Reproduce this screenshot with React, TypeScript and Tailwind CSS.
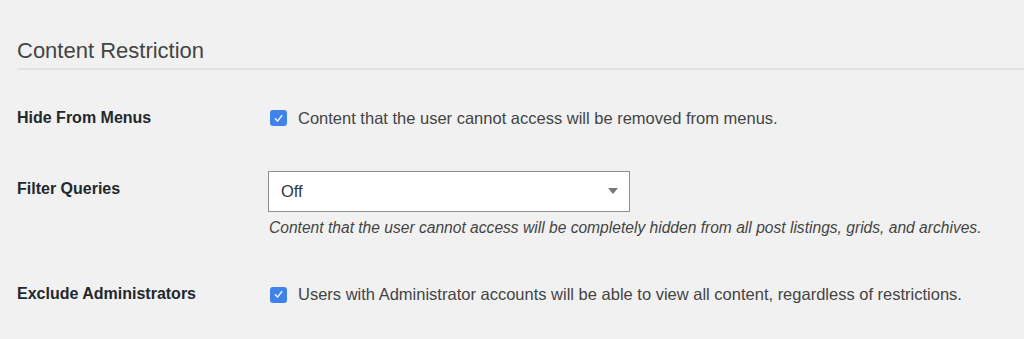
import React from "react";

const Checkbox = () => (
  <span className="flex h-[16px] w-[17px] shrink-0 items-center justify-center rounded-[3px] bg-[#3f83ea]">
    <svg viewBox="0 0 12 12" className="h-[11px] w-[11px]" fill="none">
      <path d="M2.5 6.3 L5 8.8 L9.6 2.8" stroke="#fff" strokeWidth="1.5" strokeLinecap="round" strokeLinejoin="round" />
    </svg>
  </span>
);

const Row = ({ label, children }: { label: string; children: React.ReactNode }) => (
  <div className="flex">
    <div className="w-[252px] shrink-0 text-[16px] font-bold text-[#23282d]">{label}</div>
    <div className="flex-1">{children}</div>
  </div>
);

export default function App() {
  return (
    <div
      className="h-[339px] w-[1024px] overflow-hidden bg-[#f1f1f1] pl-[17px] pt-[38px]"
      style={{ fontFamily: '"Liberation Sans", Arial, sans-serif' }}
    >
      <h2 className="text-[22px] leading-[26px] text-[#444]">Content Restriction</h2>
      <div className="mt-[4px] h-[2px] bg-[#e2e2e2]" />

      <div className="mt-[36px]">
        <Row label="Hide From Menus">
          <div className="flex items-center gap-[11px] pl-[1px]">
            <Checkbox />
            <span className="text-[16.5px] text-[#444]">
              Content that the user cannot access will be removed from menus.
            </span>
          </div>
        </Row>
      </div>

      <div className="mt-[46px]">
        <Row label="Filter Queries">
          <div className="-mt-[6px]">
            <div className="flex h-[41px] w-[362px] -ml-[1px] items-center justify-between border border-[#8c8f94] bg-white pl-[12px] pr-[11px]">
              <span className="text-[16.5px] text-[#32373c]">Off</span>
              <svg viewBox="0 0 10 6" className="h-[6px] w-[10px]">
                <path d="M0 0 L10 0 L5 6 Z" fill="#777" />
              </svg>
            </div>
            <p className="mt-[4px] text-[15.6px] italic text-[#444]">
              Content that the user cannot access will be completely hidden from all post listings, grids, and archives.
            </p>
          </div>
        </Row>
      </div>

      <div className="mt-[43px]">
        <Row label="Exclude Administrators">
          <div className="flex items-center gap-[11px] pl-[1px]">
            <Checkbox />
            <span className="text-[16.5px] text-[#444]">
              Users with Administrator accounts will be able to view all content, regardless of restrictions.
            </span>
          </div>
        </Row>
      </div>
    </div>
  );
}
